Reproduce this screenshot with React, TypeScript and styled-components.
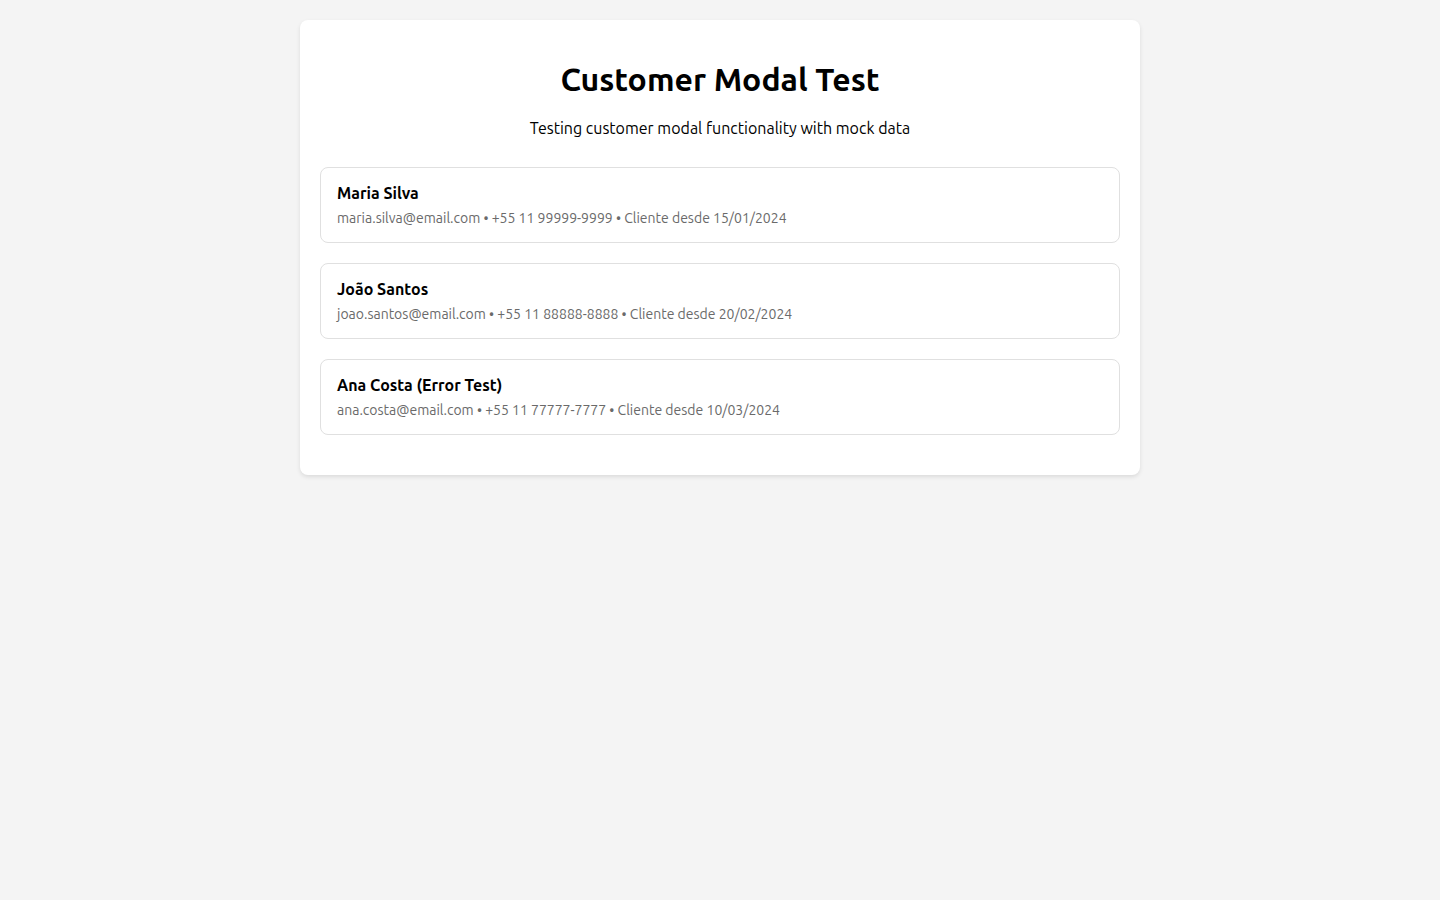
import React from 'react';
import styled, { createGlobalStyle } from 'styled-components';

const GlobalStyle = createGlobalStyle`
  body {
    margin: 0;
    background: #f4f4f4;
    font-family: Ubuntu, "Noto Sans", "Open Sans", sans-serif;
    color: #000;
  }
`;

const Container = styled.div`
  width: 800px;
  margin: 20px auto;
  padding: 20px 20px 20px;
  background: #fff;
  border-radius: 8px;
  box-shadow: 0 2px 4px rgba(0, 0, 0, 0.1);
`;

const Title = styled.h1`
  font-size: 32px;
  font-weight: bold;
  text-align: center;
  margin: 21px 0 21px;
  line-height: 36px;
`;

const SubText = styled.p`
  font-size: 16px;
  text-align: center;
  margin: 0 0 29px;
  line-height: 20px;
`;

const CustomerList = styled.div`
  display: flex;
  flex-direction: column;
  gap: 20px;
  margin-bottom: 20px;
`;

const CustomerCard = styled.div`
  border: 1px solid #e0e0e0;
  border-radius: 8px;
  padding: 15px 16px 14px;
  cursor: pointer;
`;

const CustomerName = styled.div`
  font-size: 16px;
  font-weight: bold;
  line-height: 20px;
  margin-bottom: 5px;
`;

const CustomerInfo = styled.div`
  font-size: 14px;
  color: #6a6a6a;
  line-height: 20px;
`;

const customers = [
  { name: 'Maria Silva', email: 'maria.silva@email.com', phone: '+55 11 99999-9999', since: '15/01/2024' },
  { name: 'João Santos', email: 'joao.santos@email.com', phone: '+55 11 88888-8888', since: '20/02/2024' },
  { name: 'Ana Costa (Error Test)', email: 'ana.costa@email.com', phone: '+55 11 77777-7777', since: '10/03/2024' },
];

const App: React.FC = () => {
  return (
    <>
      <GlobalStyle />
      <Container>
        <Title>Customer Modal Test</Title>
        <SubText>Testing customer modal functionality with mock data</SubText>
        <CustomerList>
          {customers.map((c) => (
            <CustomerCard key={c.email}>
              <CustomerName>{c.name}</CustomerName>
              <CustomerInfo>
                {c.email} • {c.phone} • Cliente desde {c.since}
              </CustomerInfo>
            </CustomerCard>
          ))}
        </CustomerList>
      </Container>
    </>
  );
};

export default App;
